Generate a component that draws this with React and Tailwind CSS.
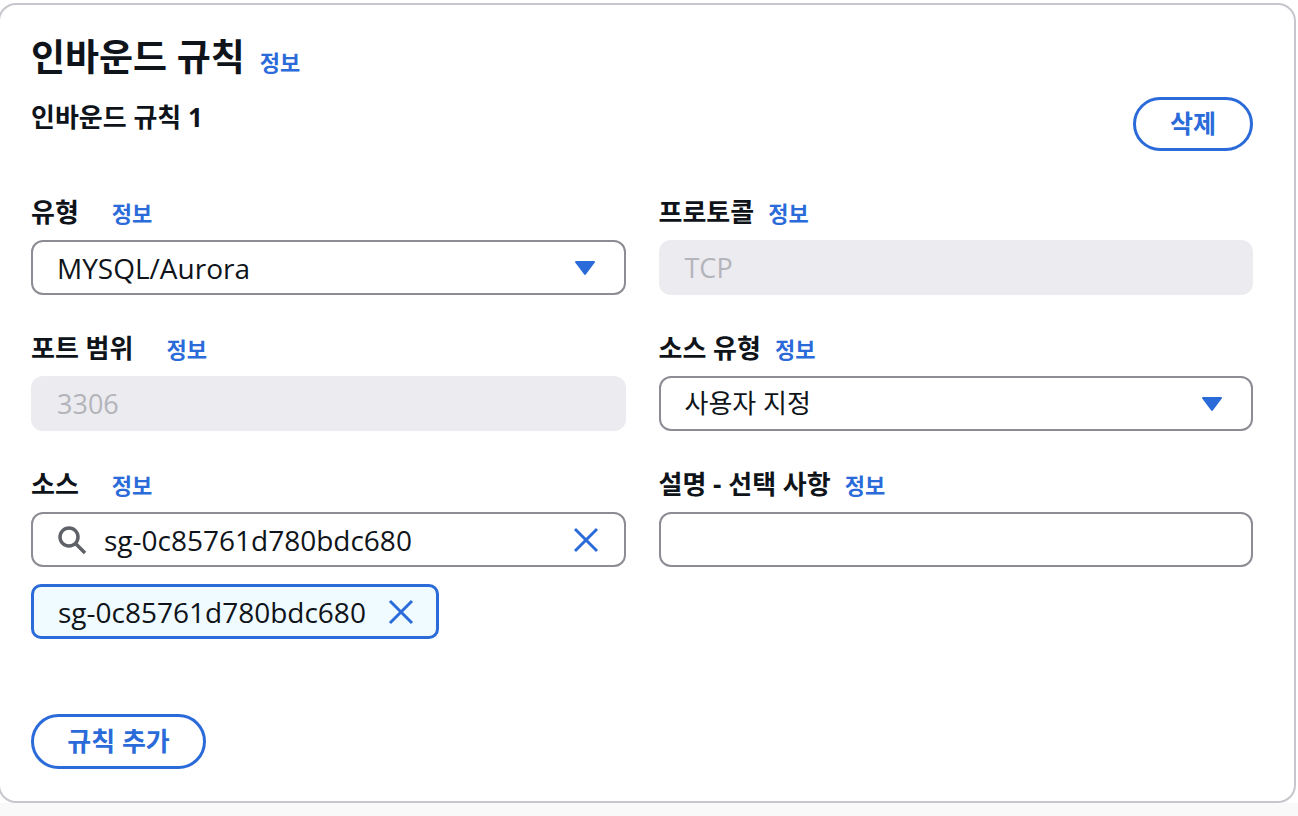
import React from "react";

const FONT = { fontFamily: '"Open Sans","Noto Sans CJK KR",sans-serif' };

function Info({ gap }) {
  return (
    <span className={`text-[22px] font-bold text-[#2b6bd9] ${gap}`}>정보</span>
  );
}

function Label({ text, wide }) {
  return (
    <div className="flex items-baseline h-[28px] leading-[28px]">
      <span className="text-[26px] font-bold text-[#0f141a]">{text}</span>
      <Info gap={wide ? "ml-[33px]" : "ml-[14px]"} />
    </div>
  );
}

function Caret() {
  return (
    <svg width="22" height="16" viewBox="0 0 22 16">
      <path d="M2 2 L20 2 L11 14 Z" fill="#2b6bd9" stroke="#2b6bd9" strokeWidth="2" strokeLinejoin="round" />
    </svg>
  );
}

function XIcon({ size = 28 }) {
  return (
    <svg width={size} height={size} viewBox="0 0 28 28">
      <path d="M3 3 L25 25 M25 3 L3 25" stroke="#2b6bd9" strokeWidth="3" strokeLinecap="butt" fill="none" />
    </svg>
  );
}

function Search() {
  return (
    <svg width="30" height="30" viewBox="0 0 30 30">
      <circle cx="12" cy="12" r="9" stroke="#5f6168" strokeWidth="3.5" fill="none" />
      <path d="M19 19 L28 28" stroke="#5f6168" strokeWidth="3.5" strokeLinecap="butt" />
    </svg>
  );
}

function Select({ value, ko }) {
  return (
    <div className="h-[55px] border-2 border-[#8c8c94] rounded-[12px] flex items-center pl-[24px] pr-[28px] justify-between">
      <span className={`${ko ? "text-[26px]" : "text-[28px]"} text-[#0f141a]`}>{value}</span>
      <Caret />
    </div>
  );
}

function Disabled({ value }) {
  return (
    <div className="h-[55px] bg-[#ebebf0] rounded-[12px] flex items-center pl-[26px] pt-[2px]">
      <span className="text-[27px] text-[#b4b4bb]">{value}</span>
    </div>
  );
}

export default function App() {
  return (
    <div className="w-[1298px] h-[816px] bg-white flex flex-col overflow-hidden" style={FONT}>
      <div className="h-[3px] shrink-0 bg-white" />
      <div className="-ml-[2px] w-[1298px] h-[800px] shrink-0 border-2 border-[#c6c6cd] rounded-[18px] bg-white pl-[31px] pr-[41px] pt-[32px]">
        <div className="flex items-baseline h-[40px]">
          <span className="text-[37px] leading-[40px] font-bold text-[#0f141a]">인바운드 규칙</span>
          <span className="ml-[15px] text-[22px] font-bold text-[#2b6bd9]">정보</span>
        </div>
        <div className="flex justify-between items-start mt-[20px]">
          <span className="mt-[6px] text-[26px] leading-[28px] font-bold text-[#0f141a]">인바운드 규칙 1</span>
          <button className="w-[120px] h-[54px] border-[3px] border-[#2b6bd9] rounded-full text-[25px] font-bold text-[#2b6bd9] flex items-center justify-center">
            삭제
          </button>
        </div>
        <div className="grid grid-cols-2 gap-x-[33px] mt-[47px]">
          <div className="flex flex-col gap-[14px]">
            <Label text="유형" wide />
            <Select value="MYSQL/Aurora" />
          </div>
          <div className="flex flex-col gap-[14px]">
            <Label text="프로토콜" />
            <Disabled value="TCP" />
          </div>
          <div className="flex flex-col gap-[14px] mt-[39px]">
            <Label text="포트 범위" wide />
            <Disabled value="3306" />
          </div>
          <div className="flex flex-col gap-[14px] mt-[39px]">
            <Label text="소스 유형" />
            <Select value="사용자 지정" ko />
          </div>
          <div className="flex flex-col mt-[39px]">
            <Label text="소스" wide />
            <div className="mt-[14px] h-[55px] border-2 border-[#8c8c94] rounded-[12px] flex items-center pl-[24px] pr-[24px]">
              <Search />
              <span className="ml-[17px] text-[28px] text-[#0f141a] flex-1">sg-0c85761d780bdc680</span>
              <XIcon />
            </div>
            <div className="mt-[17px] self-start h-[55px] border-[3px] border-[#2b6bd9] bg-[#f0fbff] rounded-[10px] flex items-center pl-[24px] pr-[21px]">
              <span className="text-[28px] text-[#0f141a]">sg-0c85761d780bdc680</span>
              <span className="ml-[21px] flex"><XIcon /></span>
            </div>
          </div>
          <div className="flex flex-col gap-[14px] mt-[39px]">
            <Label text="설명 - 선택 사항" />
            <div className="h-[55px] border-2 border-[#8c8c94] rounded-[12px]" />
          </div>
        </div>
        <button className="mt-[75px] w-[175px] h-[55px] border-[3px] border-[#2b6bd9] rounded-full text-[26px] font-bold text-[#2b6bd9] flex items-center justify-center">
          규칙 추가
        </button>
      </div>
      <div className="flex-1 bg-[#f9f9fa]" />
    </div>
  );
}
